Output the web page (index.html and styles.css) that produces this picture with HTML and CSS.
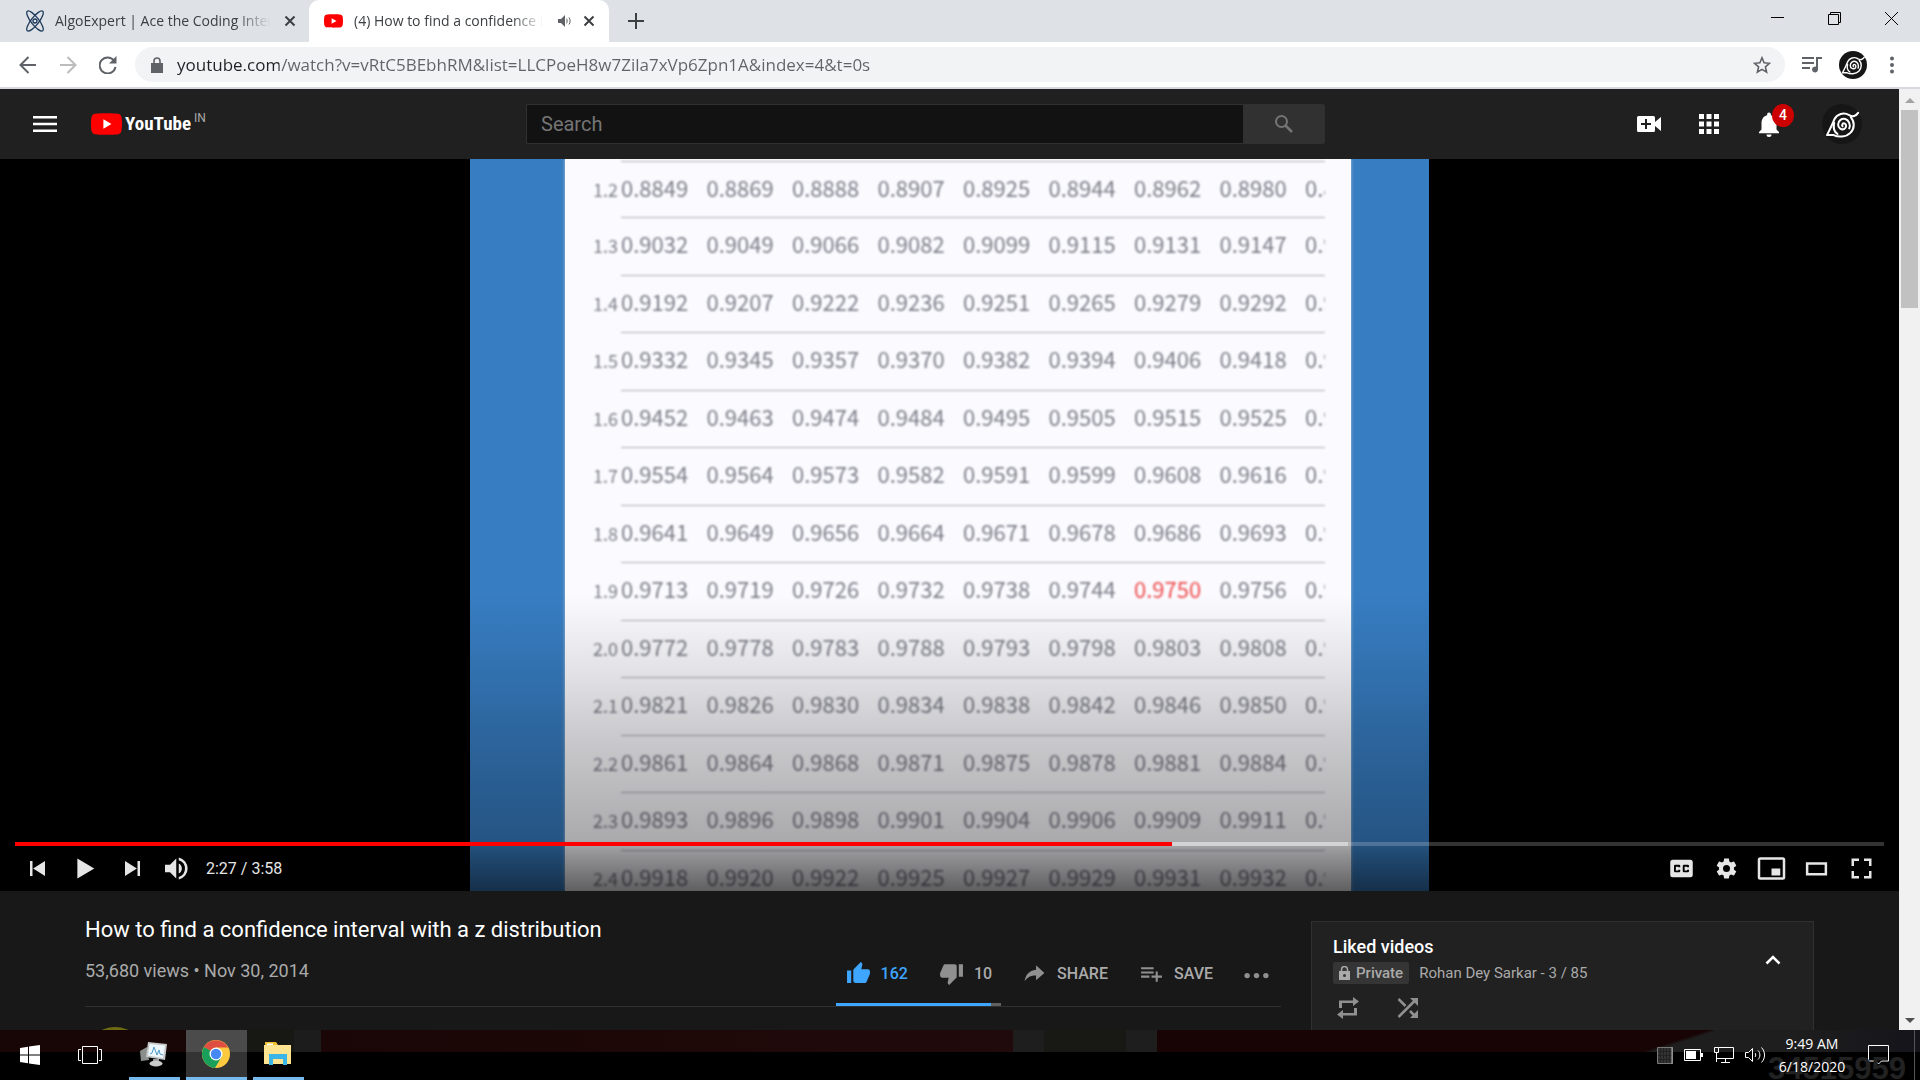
FILE: index.html
```html
<!DOCTYPE html>
<html lang="en">
<head>
<meta charset="utf-8">
<title>How to find a confidence interval with a z distribution - YouTube</title>
<link rel="stylesheet" href="styles.css">
</head>
<body>
<svg width="0" height="0" class="defs" aria-hidden="true">
  <symbol id="leaf" viewBox="0 0 36 36">
    <circle cx="18" cy="18" r="18" fill="#161616"/>
    <g fill="none" stroke="#fff" stroke-width="1.800" stroke-linecap="round" stroke-linejoin="round">
      <path d="M32.500 8c-2 3-5 4-8 2-5-3-11-1-13.500 4-1.500 4-4 9-6.500 14h6c4 2 11 2 15-2 4-4 4-10 .5-14"/>
      <path d="M11 17c-1 4 0 8 3 10"/>
      <path d="M18.500 20c-1-1 0-3 1.800-2.500s2 4-.3 5-5.500-.5-5.500-4 3.500-6 6.500-5 5 5 3.500 8.500"/>
    </g>
  </symbol>
  <symbol id="yt-mark" viewBox="0 0 30 21">
    <path fill="#f00" d="M29.300 3.300A3.800 3.800 0 0 0 26.600.6C24.300 0 15 0 15 0S5.700 0 3.400.6A3.800 3.800 0 0 0 .7 3.300C0 5.600 0 10.500 0 10.500s0 4.900.7 7.200a3.800 3.800 0 0 0 2.700 2.700C5.700 21 15 21 15 21s9.300 0 11.600-.6a3.800 3.800 0 0 0 2.700-2.700c.7-2.300.7-7.200.7-7.200s0-4.900-.7-7.200z"/>
    <path fill="#fff" d="M12 15l7.800-4.500L12 6z"/>
  </symbol>
  <symbol id="cross" viewBox="0 0 12 12"><path d="M1.500 1.500l9 9M10.500 1.500l-9 9" stroke="currentColor" stroke-width="2" fill="none"/></symbol>
</svg>

<header class="browser">
  <div class="tabs">
    <div class="tab">
      <svg width="22" height="22" viewBox="0 0 22 22" fill="none" stroke="#1d3a5a" stroke-width="1.300"><ellipse cx="11" cy="11" rx="12.500" ry="3.800" transform="rotate(52 11 11)"/><ellipse cx="11" cy="11" rx="12.500" ry="3.800" transform="rotate(-52 11 11)"/><circle cx="11" cy="11" r="2"/></svg>
      <span class="tab-title">AlgoExpert | Ace the Coding Interview</span>
      <button class="plain" aria-label="Close tab"><svg width="12" height="12"><use href="#cross"/></svg></button>
    </div>
    <div class="tab active">
      <svg width="19" height="14"><use href="#yt-mark"/></svg>
      <span class="tab-title">(4) How to find a confidence interval</span>
      <svg width="14" height="12" viewBox="0 0 14 12" fill="#5f6368"><path d="M0 4h3l4-4v12L3 8H0zM8.500 3v6c1.500-1 1.500-5 0-6z"/><path d="M11 2.500c1.500 2 1.500 5 0 7" fill="none" stroke="#5f6368"/></svg>
      <button class="plain" aria-label="Close tab"><svg width="12" height="12"><use href="#cross"/></svg></button>
    </div>
    <button class="plain new-tab" aria-label="New tab"><svg width="16" height="16" viewBox="0 0 16 16" stroke="#3c4043" stroke-width="2"><path d="M8 0v16M0 8h16"/></svg></button>
    <div class="window-buttons">
      <button class="plain" aria-label="Minimize"><svg width="13" height="13" viewBox="0 0 13 13" stroke="#000"><path d="M0 5.500h13"/></svg></button>
      <button class="plain" aria-label="Restore"><svg width="13" height="13" viewBox="0 0 13 13" stroke="#000" fill="none"><path d="M.5 2.500h10v10H.5zM2.500 2.500v-2h10v10h-2"/></svg></button>
      <button class="plain" aria-label="Close"><svg width="13" height="13" viewBox="0 0 13 13" stroke="#000"><path d="M0 0l13 13M13 0L0 13"/></svg></button>
    </div>
  </div>
  <div class="toolbar">
    <button class="plain nav" aria-label="Back"><svg width="18" height="18" viewBox="0 0 18 18" fill="none" stroke="#5f6368" stroke-width="2"><path d="M17 9H2M9.500 1L1.500 9l8 8"/></svg></button>
    <button class="plain nav" aria-label="Forward"><svg width="18" height="18" viewBox="0 0 18 18" fill="none" stroke="#babcbe" stroke-width="2"><path d="M1 9h15M8.500 1l8 8-8 8"/></svg></button>
    <button class="plain nav" aria-label="Reload"><svg width="18" height="18" viewBox="0 0 18 18"><path d="M15 4.500A8 8 0 1 0 16.500 11" fill="none" stroke="#5f6368" stroke-width="2"/><path d="M17.500 0v7.500H10z" fill="#5f6368"/></svg></button>
    <div class="omnibox">
      <svg width="12" height="16" viewBox="0 0 12 16"><path fill="#5f6368" d="M0 6h12v10H0z"/><path d="M3 6V4a3 3 0 0 1 6 0v2" fill="none" stroke="#5f6368" stroke-width="1.600"/></svg>
      <input class="url" aria-label="Address" value="youtube.com/watch?v=vRtC5BEbhRM&amp;list=LLCPoeH8w7Zila7xVp6Zpn1A&amp;index=4&amp;t=0s">
      <button class="plain" aria-label="Bookmark"><svg width="18" height="18" viewBox="0 0 18 18" fill="none" stroke="#5f6368" stroke-width="1.600"><path d="M9 1.800l2.100 5 5.400.5-4.100 3.600 1.200 5.300L9 13.400l-4.600 2.800 1.200-5.300L1.500 7.300l5.400-.5z"/></svg></button>
    </div>
    <button class="plain" aria-label="Media"><svg width="20" height="16" viewBox="0 0 20 16" fill="#5f6368"><path d="M0 0h12v2H0zM0 5h12v2H0zM0 10h8v2H0zM14 0h6v2h-4v10.500a3 3 0 1 1-2-2.800z"/></svg></button>
    <button class="plain" aria-label="Profile"><svg width="28" height="28"><use href="#leaf"/></svg></button>
    <button class="plain menu" aria-label="Menu"><svg width="4" height="18" viewBox="0 0 4 18" fill="#5f6368"><circle cx="2" cy="2.500" r="2"/><circle cx="2" cy="9" r="2"/><circle cx="2" cy="15.500" r="2"/></svg></button>
  </div>
</header>

<div class="viewport">
  <div class="page">
    <header class="masthead">
      <div class="brand">
        <button class="plain" aria-label="Guide"><svg width="24" height="16" viewBox="0 0 24 16" fill="#fff"><path d="M0 0h24v2.500H0zM0 6.700h24v2.600H0zM0 13.500h24V16H0z"/></svg></button>
        <a class="logo" href="#"><svg width="31" height="22"><use href="#yt-mark"/></svg><span class="wordmark">YouTube</span><sup>IN</sup></a>
      </div>
      <form class="search">
        <input type="text" placeholder="Search" aria-label="Search">
        <button type="button" aria-label="Search"><svg width="18" height="18" viewBox="0 0 18 18" fill="none" stroke="#757575"><circle cx="6.500" cy="6.500" r="5.500" stroke-width="2"/><path d="M10.500 10.500l6.500 6.500" stroke-width="2.500"/></svg></button>
      </form>
      <div class="account">
        <button class="plain" aria-label="Create"><svg width="24" height="16" viewBox="0 0 24 16" fill="#fff"><path fill-rule="evenodd" d="M1.500 0h15A1.500 1.500 0 0 1 18 1.500V6l6-5v14l-6-5v4.500a1.500 1.500 0 0 1-1.500 1.500h-15A1.500 1.500 0 0 1 0 14.500v-13A1.500 1.500 0 0 1 1.500 0zM8 3v4H4v2h4v4h2V9h4V7h-4V3z"/></svg></button>
        <button class="plain" aria-label="Apps"><svg width="20" height="20" viewBox="0 0 20 20" fill="#fff"><path d="M0 0h5v5H0zM7.500 0h5v5h-5zM15 0h5v5h-5zM0 7.500h5v5H0zM7.500 7.500h5v5h-5zM15 7.500h5v5h-5zM0 15h5v5H0zM7.500 15h5v5h-5zM15 15h5v5h-5z"/></svg></button>
        <button class="plain bell" aria-label="Notifications"><svg width="20" height="25" viewBox="0 0 20 25" fill="#fff"><path d="M10 25a2.500 2.500 0 0 0 2.500-2.500h-5A2.500 2.500 0 0 0 10 25zM17.500 17.500v-6.300c0-4-2-7-5.600-7.900v-.8a1.900 1.900 0 0 0-3.800 0v.8c-3.600.9-5.600 4-5.600 7.900v6.300L0 20v1.200h20V20z"/></svg><span class="badge">4</span></button>
        <button class="plain" aria-label="Account"><svg width="40" height="40"><use href="#leaf"/></svg></button>
      </div>
    </header>

    <section class="player">
      <div class="still">
        <div class="sheet">
          <table>
            <colgroup><col class="z"><col span="8"><col class="cut"></colgroup>
            <tbody>
            <tr><th>1.2</th><td>0.8849</td><td>0.8869</td><td>0.8888</td><td>0.8907</td><td>0.8925</td><td>0.8944</td><td>0.8962</td><td>0.8980</td><td>0.8</td></tr>
            <tr><th>1.3</th><td>0.9032</td><td>0.9049</td><td>0.9066</td><td>0.9082</td><td>0.9099</td><td>0.9115</td><td>0.9131</td><td>0.9147</td><td>0.9</td></tr>
            <tr><th>1.4</th><td>0.9192</td><td>0.9207</td><td>0.9222</td><td>0.9236</td><td>0.9251</td><td>0.9265</td><td>0.9279</td><td>0.9292</td><td>0.9</td></tr>
            <tr><th>1.5</th><td>0.9332</td><td>0.9345</td><td>0.9357</td><td>0.9370</td><td>0.9382</td><td>0.9394</td><td>0.9406</td><td>0.9418</td><td>0.9</td></tr>
            <tr><th>1.6</th><td>0.9452</td><td>0.9463</td><td>0.9474</td><td>0.9484</td><td>0.9495</td><td>0.9505</td><td>0.9515</td><td>0.9525</td><td>0.9</td></tr>
            <tr><th>1.7</th><td>0.9554</td><td>0.9564</td><td>0.9573</td><td>0.9582</td><td>0.9591</td><td>0.9599</td><td>0.9608</td><td>0.9616</td><td>0.9</td></tr>
            <tr><th>1.8</th><td>0.9641</td><td>0.9649</td><td>0.9656</td><td>0.9664</td><td>0.9671</td><td>0.9678</td><td>0.9686</td><td>0.9693</td><td>0.9</td></tr>
            <tr><th>1.9</th><td>0.9713</td><td>0.9719</td><td>0.9726</td><td>0.9732</td><td>0.9738</td><td>0.9744</td><td class="hit">0.9750</td><td>0.9756</td><td>0.9</td></tr>
            <tr><th>2.0</th><td>0.9772</td><td>0.9778</td><td>0.9783</td><td>0.9788</td><td>0.9793</td><td>0.9798</td><td>0.9803</td><td>0.9808</td><td>0.9</td></tr>
            <tr><th>2.1</th><td>0.9821</td><td>0.9826</td><td>0.9830</td><td>0.9834</td><td>0.9838</td><td>0.9842</td><td>0.9846</td><td>0.9850</td><td>0.9</td></tr>
            <tr><th>2.2</th><td>0.9861</td><td>0.9864</td><td>0.9868</td><td>0.9871</td><td>0.9875</td><td>0.9878</td><td>0.9881</td><td>0.9884</td><td>0.9</td></tr>
            <tr><th>2.3</th><td>0.9893</td><td>0.9896</td><td>0.9898</td><td>0.9901</td><td>0.9904</td><td>0.9906</td><td>0.9909</td><td>0.9911</td><td>0.9</td></tr>
            <tr><th>2.4</th><td>0.9918</td><td>0.9920</td><td>0.9922</td><td>0.9925</td><td>0.9927</td><td>0.9929</td><td>0.9931</td><td>0.9932</td><td>0.9</td></tr>
            </tbody>
          </table>
        </div>
      </div>
      <div class="chrome">
        <div class="progress"><div class="loaded" style="width:71.3%"></div><div class="played" style="width:61.9%"></div></div>
        <div class="controls">
          <button class="plain" aria-label="Previous"><svg viewBox="0 0 36 36"><path d="M12 12h2v12h-2zM14.500 18l9.500 6V12z"/></svg></button>
          <button class="plain play" aria-label="Play"><svg viewBox="0 0 36 36"><path d="M11.500 10l13.500 8-13.500 8z"/></svg></button>
          <button class="plain" aria-label="Next"><svg viewBox="0 0 36 36"><path d="M12 24l9.500-6L12 12zM22 12v12h2V12z"/></svg></button>
          <button class="plain" aria-label="Mute"><svg viewBox="0 0 36 36"><path d="M8 21h4l5 5V10l-5 5H8zM19 14v8c1.500-.7 2.500-2.200 2.500-4s-1-3.300-2.500-4zM19 11.300a7 7 0 0 1 0 13.400v2.100a9 9 0 0 0 0-17.600z"/></svg></button>
          <span class="time">2:27 / 3:58</span>
          <button class="plain" aria-label="Subtitles"><svg viewBox="0 0 36 36"><path fill-rule="evenodd" d="M11 11h14a2 2 0 0 1 2 2v10a2 2 0 0 1-2 2H11a2 2 0 0 1-2-2V13a2 2 0 0 1 2-2zm6 6v-1a1 1 0 0 0-1-1h-3a1 1 0 0 0-1 1v4a1 1 0 0 0 1 1h3a1 1 0 0 0 1-1v-1h-1.500v.5h-2v-3h2v.5zm7 0v-1a1 1 0 0 0-1-1h-3a1 1 0 0 0-1 1v4a1 1 0 0 0 1 1h3a1 1 0 0 0 1-1v-1h-1.500v.5h-2v-3h2v.5z"/></svg></button>
          <button class="plain" aria-label="Settings"><svg viewBox="0 0 36 36"><path d="m23.940 18.780c.03-.25.05-.51.05-.78 0-.27-.02-.52-.05-.78l1.680-1.320c.15-.12.190-.33.090-.51l-1.600-2.760c-.09-.17-.31-.24-.48-.17l-1.990.8c-.41-.32-.86-.58-1.350-.78l-.3-2.120c-.02-.19-.19-.33-.39-.33l-3.200 0c-.2 0-.36.140-.39.330l-.3 2.120c-.48.200-.93.470-1.350.78l-1.990-.8c-.18-.07-.39 0-.48.170l-1.600 2.760c-.10.170-.05.390.090.510l1.680 1.320c-.03.250-.05.520-.05.780 0 .260.020.520.050.78l-1.680 1.320c-.15.120-.19.330-.09.510l1.600 2.760c.090.170.310.240.480.170l1.990-.8c.410.320.86.58 1.350.78l.3 2.120c.020.190.190.330.390.330l3.200 0c.2 0 .36-.14.390-.33l.3-2.120c.48-.2.930-.47 1.350-.78l1.990.8c.180.070.390 0 .480-.17l1.600-2.760c.09-.17.05-.39-.09-.51zM18 20.800a2.800 2.800 0 1 1 0-5.600 2.800 2.800 0 0 1 0 5.600z"/></svg></button>
          <button class="plain" aria-label="Miniplayer"><svg viewBox="0 0 36 36"><path fill-rule="evenodd" d="M9 9h18a2 2 0 0 1 2 2v14a2 2 0 0 1-2 2H9a2 2 0 0 1-2-2V11a2 2 0 0 1 2-2zm0 2v14h18V11zm9 7h7v5.500h-7z"/></svg></button>
          <button class="plain" aria-label="Theater mode"><svg viewBox="0 0 36 36"><path fill-rule="evenodd" d="M9.500 13h17v10.500h-17zm2 2v6.500h13V15z"/></svg></button>
          <button class="plain" aria-label="Full screen"><svg viewBox="0 0 36 36"><path d="M10 16h2v-4h4v-2h-6zM20 10v2h4v4h2v-6zM24 24h-4v2h6v-6h-2zM12 20h-2v6h6v-2h-4z"/></svg></button>
        </div>
      </div>
    </section>

    <main class="below">
      <section class="info">
        <h1>How to find a confidence interval with a z distribution</h1>
        <div class="meta">
          <span class="views">53,680 views • Nov 30, 2014</span>
          <div class="actions">
            <div class="sentiment">
              <button class="plain liked"><svg viewBox="0 0 24 24"><path d="M1 21h4V9H1zM23 10a2 2 0 0 0-2-2h-6.300l1-4.600v-.3c0-.4-.2-.8-.5-1.100L14.200 1 7.600 7.600A2 2 0 0 0 7 9v10a2 2 0 0 0 2 2h9c.8 0 1.500-.5 1.800-1.200l3-7.100c.1-.2.200-.5.200-.7z"/></svg>162</button>
              <button class="plain"><svg viewBox="0 0 24 24"><path d="M15 3H6c-.8 0-1.500.5-1.800 1.200l-3 7.100c-.1.2-.2.500-.2.700v2a2 2 0 0 0 2 2h6.300l-1 4.600v.3c0 .4.200.8.500 1.100L9.800 23l6.600-6.600c.4-.4.600-.9.600-1.400V5a2 2 0 0 0-2-2zM19 3v12h4V3z"/></svg>10</button>
            </div>
            <button class="plain"><svg viewBox="0 0 24 24"><path d="M13.500 8.500V4l8 7.500-8 7v-4.600c-5 0-8.500 1.600-11 5.600 1-6 4-10 11-11z"/></svg>SHARE</button>
            <button class="plain"><svg viewBox="0 0 24 24"><path d="M2 6h12v2H2zM2 10h12v2H2zM2 14h8v2H2zM16 10h2v4h4v2h-4v4h-2v-4h-4v-2h4z"/></svg>SAVE</button>
            <button class="plain" aria-label="More actions"><svg viewBox="0 0 24 24"><circle cx="3" cy="14" r="2.600"/><circle cx="12" cy="14" r="2.600"/><circle cx="21" cy="14" r="2.600"/></svg></button>
          </div>
        </div>
        <div class="owner"></div>
      </section>
      <aside class="playlist">
        <div class="playlist-head">
          <div>
            <h2>Liked videos</h2>
            <p><span class="private"><svg width="11" height="14" viewBox="0 0 11 14"><path fill="#aaa" fill-rule="evenodd" d="M0 5h11v9H0zm5.500 3a1.500 1.500 0 1 0 0 3 1.500 1.500 0 0 0 0-3z"/><path d="M2.500 5V3.500a3 3 0 0 1 6 0V5" fill="none" stroke="#aaa" stroke-width="1.500"/></svg>Private</span>Rohan Dey Sarkar - 3 / 85</p>
          </div>
          <button class="plain" aria-label="Collapse"><svg width="16" height="10" viewBox="0 0 16 10" fill="none" stroke="#fff" stroke-width="2.500"><path d="M1.500 8.500L8 2l6.500 6.500"/></svg></button>
        </div>
        <div class="playlist-tools">
          <button class="plain" aria-label="Loop"><svg width="22" height="26" viewBox="0 0 22 26"><path fill="#909090" d="M4 5.500h12V2l6 4.500-6 4.500V8H5v5H2V5.500zM18 20.500H6V24l-6-4.500L6 15v3h11v-5h3v7.500z"/></svg></button>
          <button class="plain" aria-label="Shuffle"><svg width="22" height="22" viewBox="0 0 22 22" fill="none" stroke="#909090" stroke-width="2.500"><path d="M1.500 2l7 7M1.500 20L18 3.500M13 14l5.500 5.500"/><path fill="#909090" stroke="none" d="M13 1h8v8zM21 13v8h-8z"/></svg></button>
        </div>
      </aside>
    </main>
  </div>
  <div class="scrollbar" aria-hidden="true">
    <svg width="10" height="5" viewBox="0 0 10 5"><path fill="#a3a3a3" d="M0 5l5-5 5 5z"/></svg>
    <div class="thumb"></div>
    <svg width="10" height="5" viewBox="0 0 10 5"><path fill="#505050" d="M0 0l5 5 5-5z"/></svg>
  </div>
</div>

<footer class="taskbar">
  <button class="plain start" aria-label="Start"><svg width="20" height="20" viewBox="0 0 20 20" fill="#fff"><path d="M0 3l8-1.200v7.700H0zM9 1.600L20 0v9.500H9zM0 10.500h8v7.700L0 17zM9 10.500h11V20L9 18.400z"/></svg></button>
  <button class="plain start" aria-label="Task view"><svg width="24" height="18" viewBox="0 0 24 18" fill="none" stroke="#fff"><path d="M4.500.5h15v17h-15zM3 3.500H.5v11H3M21 3.500h2.500v11H21" /></svg></button>
  <div class="apps">
    <button class="plain" aria-label="Task Manager"><svg width="28" height="26" viewBox="0 0 28 26"><path fill="#8b8f8b" d="M0 10l7-4 2 13-8 1z"/><path fill="#c4c8c9" d="M8 1l19 2-2 16-19-3z"/><path fill="#eef7fb" d="M9.500 3L25 4.500l-2 12.500L8 14.500z"/><path d="M10 13l2-1 2-6 3 8 2-5 1 4 3 1" fill="none" stroke="#4b9cc8"/><path fill="#999" d="M13 18h6v4h-6z"/><ellipse cx="16" cy="22.500" rx="6.500" ry="3" fill="#c9cbcb"/></svg></button>
    <button class="plain current" aria-label="Google Chrome"><svg width="28" height="28" viewBox="0 0 28 28"><circle cx="14" cy="14" r="14" fill="#fdca3f"/><path fill="#1a9f5a" d="M14 14L1.900 7A14 14 0 0 0 13 28l6.500-11z"/><path fill="#de4f42" d="M14 14L1.900 7a14 14 0 0 1 24.300 0.500H14z"/><path fill="#1a9f5a" d="M1.900 7l6 10.500L14 14z"/><circle cx="14" cy="14" r="6.500" fill="#fff"/><circle cx="14" cy="14" r="5.200" fill="#4688f4"/></svg></button>
    <button class="plain" aria-label="File Explorer"><svg width="28" height="24" viewBox="0 0 28 24"><path fill="#f2c02c" d="M1 0h11l2 3H1z"/><path fill="#fee391" d="M0 3h27v19H0z"/><path fill="#fff" d="M3 1.500h6V3H3z"/><path fill="#3bb5e8" d="M5 12h18v11h-4v-6H9v6H5z"/></svg></button>
  </div>
  <div class="tray">
    <svg width="16" height="17" viewBox="0 0 16 17"><path fill="#333" stroke="#777" d="M.5.500h15v16H.5z"/><path d="M3.500 1v15M6.500 1v15M9.500 1v15M12.500 1v15M1 4.500h14M1 8.500h14M1 12.500h14" stroke="#222"/><path d="M15 0v17" stroke="#aaa"/></svg>
    <svg width="19" height="12" viewBox="0 0 19 12"><path d="M.5.500h16v11H.5z" fill="none" stroke="#fff"/><path fill="#fff" d="M2 2h10v8H2zM17 4h2v4h-2z"/></svg>
    <svg width="20" height="16" viewBox="0 0 20 16" fill="none" stroke="#fff"><path d="M4.500.500h15v11H3M.5.500h4v5h-4zM2.500 5.500V15M11.500 12v3M7 15.500h9"/></svg>
    <svg width="21" height="18" viewBox="0 0 21 18" fill="none" stroke="#fff"><path d="M.5 6.500h3l4-4v13l-4-4h-3zM10 7c1 1 1 3 0 4M13 4.500c2.500 2.500 2.500 6.500 0 9M16.500 1.500c4 4 4 11 0 15"/></svg>
    <div class="clock"><span>9:49 AM</span><span>6/18/2020</span></div>
    <svg width="21" height="20" viewBox="0 0 21 20" fill="none" stroke="#fff"><path d="M.5.500h20v15.500h-7l-3 3-3-3h-7z"/></svg>
    <span class="watermark" aria-hidden="true">34515959</span>
  </div>
</footer>
</body>
</html>
```
FILE: styles.css
```css
* { box-sizing: border-box; }

body {
  margin: 0;
  height: 100vh;
  display: flex;
  flex-direction: column;
  overflow: hidden;
  background: #000;
  font-family: Roboto, "Liberation Sans", sans-serif;
}

.defs { position: absolute; }
svg { display: block; flex: none; }
h1, h2, p { margin: 0; font-weight: 400; }

.plain {
  display: flex;
  align-items: center;
  justify-content: center;
  padding: 0;
  border: 0;
  background: none;
  color: inherit;
  font: inherit;
}

/* Browser window */
.browser {
  flex: none;
  background: #fff;
  border-bottom: 2px solid #d8d8df;
  font-family: "Open Sans", "Noto Sans", sans-serif;
}

.tabs {
  display: flex;
  height: 42px;
  background: #dee1e6;
  color: #3c4043;
}

.tab {
  display: flex;
  align-items: center;
  gap: 9px;
  width: 309px;
  padding: 0 13px 0 24px;
  font-size: 14px;
}

.tab.active {
  width: 300px;
  padding: 0 14px 0 15px;
  gap: 11px;
  border-radius: 10px 10px 0 0;
  background: #fff;
}

.tab-title {
  flex: 1;
  overflow: hidden;
  white-space: nowrap;
  line-height: 24px;
  mask-image: linear-gradient(90deg, #000 82%, transparent 98%);
}

.new-tab { width: 54px; }

.window-buttons {
  display: flex;
  margin-left: auto;
}

.window-buttons button { width: 57px; height: 36px; }

.toolbar {
  display: flex;
  align-items: center;
  gap: 17px;
  height: 45px;
  padding: 0 20px 0 8px;
}

.nav { width: 40px; }
.nav + .nav { margin-left: -17px; }
.menu { width: 16px; }

.omnibox {
  flex: 1;
  display: flex;
  align-items: center;
  gap: 14px;
  height: 35px;
  margin-left: -10px;
  padding: 0 14px 0 16px;
  border-radius: 18px;
  background: #f1f3f4;
}

.url {
  flex: 1;
  padding: 0;
  border: 0;
  outline: 0;
  font: 17px/24px "Open Sans", "Noto Sans", sans-serif;
  color: transparent;
  background: linear-gradient(90deg, #202124 102px, #5f6368 102px);
  background-clip: text;
}

/* Page and its scrollbar */
.viewport {
  flex: 1;
  min-height: 0;
  display: flex;
}

.page {
  flex: 1;
  min-width: 0;
  overflow: hidden;
  background: #181818;
  color: #fff;
}

.scrollbar {
  display: flex;
  flex-direction: column;
  align-items: center;
  width: 21px;
  padding: 9px 0 7px;
  background: #f1f1f1;
}

.thumb {
  width: 17px;
  height: 198px;
  margin: 7px 0 auto;
  background: #c1c1c1;
}

/* Masthead */
.masthead {
  display: flex;
  align-items: center;
  justify-content: space-between;
  height: 70px;
  padding: 0 37px 0 33px;
  background: #202020;
}

.brand, .logo, .account { display: flex; align-items: center; }
.brand { width: 304px; gap: 34px; }
.logo { color: #fff; text-decoration: none; }

.wordmark {
  margin-left: 3px;
  font: bold 19px/24px "Liberation Sans Narrow", "Roboto Condensed", Roboto, sans-serif;
}

.logo sup {
  align-self: flex-start;
  margin-left: 3px;
  color: #aaa;
  font-size: 12px;
  line-height: 12px;
}

.search {
  display: flex;
  flex: 0 1 922px;
  height: 40px;
  padding-right: 123px;
}

.search input {
  flex: 1;
  min-width: 0;
  padding: 0 14px;
  border: 1px solid #303030;
  border-right: 0;
  border-radius: 2px 0 0 2px;
  background: #121212;
  color: #fff;
  font: 20px/24px Roboto, sans-serif;
}

.search input::placeholder { color: #757575; }

.search button {
  display: flex;
  align-items: center;
  justify-content: center;
  width: 82px;
  padding: 0;
  border: 1px solid #303030;
  border-radius: 0 2px 2px 0;
  background: #313131;
}

.account { gap: 38px; width: 225px; }

.bell { position: relative; margin: 0 5px 0 2px; }

.badge {
  position: absolute;
  left: 13px;
  top: -8px;
  width: 22px;
  height: 23px;
  border-radius: 50%;
  background: #c00;
  font: 500 14px/22px Roboto, sans-serif;
  text-align: center;
}

/* Player */
.player {
  position: relative;
  height: calc(100vh - 348px);
  background: #000;
  overflow: hidden;
}

.still {
  width: 959px;
  height: 100%;
  margin: 0 auto;
  padding: 0 78px 0 95px;
  background: #377dc2;
  overflow: hidden;
}

.sheet {
  height: 100%;
  padding: 2px 0 0 28px;
  background: #fbfbff;
  box-shadow: 0 0 3px #b8c8d8;
  overflow: hidden;
}

.sheet table {
  width: 732px;
  table-layout: fixed;
  border-collapse: separate;
  border-spacing: 0;
  color: #7c7c88;
  font-family: "Noto Sans CJK JP", "Noto Sans", sans-serif;
  filter: blur(1px);
}

.z { width: 28px; }
.cut { width: 20px; }
.sheet tr { height: 57px; }
.sheet tr:nth-child(even) { height: 58px; }

.sheet td, .sheet th {
  padding: 0;
  overflow: hidden;
  text-align: left;
  vertical-align: baseline;
  white-space: nowrap;
  line-height: 51px;
  font-size: 22px;
}

.sheet td { border-bottom: 1px solid #a8a8b4; }
.sheet tr:first-child td { border-top: 1px solid #a8a8b4; }
.sheet th { font-size: 18px; font-weight: 400; }
.sheet .hit { color: #ee4a4a; }

.chrome {
  position: absolute;
  inset: auto 0 0;
  padding: 248px 15px 0;
  background: linear-gradient(transparent, rgba(0, 0, 0, 0.1) 27%, rgba(0, 0, 0, 0.19) 46%, rgba(0, 0, 0, 0.32) 83%, rgba(0, 0, 0, 0.42) 88%, rgba(0, 0, 0, 0.62));
}

.progress {
  position: relative;
  height: 4px;
  background: rgba(255, 255, 255, 0.2);
}

.loaded, .played { position: absolute; inset: 0 auto 0 0; }
.loaded { background: rgba(255, 255, 255, 0.4); }
.played { background: #f00; }

.controls {
  display: flex;
  align-items: center;
  height: 45px;
  color: #e6e6e6;
}

.controls button, .controls svg { width: 45px; height: 45px; }
.controls .play { width: 50px; }
.controls svg { fill: #e6e6e6; }

.time {
  margin: 0 auto 0 6px;
  font-size: 16px;
  line-height: 20px;
}

/* Below the player */
.below {
  display: grid;
  grid-template-columns: minmax(0, 1fr) 503px;
  gap: 30px;
  padding: 0 85px;
}

.info { padding-top: 24px; }

.info h1 {
  font-size: 22px;
  line-height: 30px;
}

.meta {
  display: flex;
  justify-content: space-between;
  height: 62px;
  border-bottom: 1px solid #303030;
}

.views {
  padding-top: 14px;
  color: #aaa;
  font-size: 18px;
  line-height: 24px;
}

.actions {
  display: flex;
  gap: 31px;
  padding-right: 12px;
  color: #aaa;
  font-size: 16px;
  font-weight: 500;
}

.actions button {
  gap: 10px;
  padding-bottom: 5px;
}

.actions svg {
  width: 25px;
  height: 25px;
  fill: #909090;
}

.sentiment {
  display: flex;
  gap: 31px;
  padding: 0 9px 3px 10px;
  background: linear-gradient(90deg, #3ea6ff 94%, #606060 94%) bottom / 100% 3px no-repeat;
}

.sentiment button { padding-bottom: 2px; }
.actions .sentiment + button { margin-left: -10px; }

.actions .liked { color: #3ea6ff; }
.liked svg { fill: #3ea6ff; }

.owner {
  width: 60px;
  height: 60px;
  margin-top: 20px;
  border-radius: 50%;
  background: #6f6a14;
}

.playlist {
  margin-top: 30px;
  padding: 13px 20px 20px 21px;
  border: 1px solid #303030;
  background: #212121;
  color: #aaa;
}

.playlist-head {
  display: flex;
  justify-content: space-between;
  align-items: center;
  padding-right: 12px;
}

.playlist h2 {
  color: #fff;
  font-size: 18px;
  font-weight: 500;
  line-height: 24px;
}

.playlist p {
  display: flex;
  align-items: center;
  gap: 10px;
  margin-top: 3px;
  font-size: 15px;
  line-height: 22px;
}

.private {
  display: flex;
  align-items: center;
  gap: 6px;
  padding: 0 6px;
  border-radius: 2px;
  background: #353535;
  font-weight: 500;
}

.playlist-tools {
  display: flex;
  gap: 38px;
  margin-top: 11px;
  padding-left: 4px;
}

/* Taskbar */
.taskbar {
  position: relative;
  flex: none;
  display: flex;
  height: 50px;
  background:
    linear-gradient(162deg, #180404 46%, #1e1e1e 54%) 1645px 0 / 70px 22px no-repeat,
    linear-gradient(90deg, #180606 186px, #171714 186px 294px, #1c1c1c 294px 321px, #1a0606 321px, #210a0b 1013px, #1e1e1e 1013px 1044px, #181814 1044px 1126px, #1e1e1e 1126px 1157px, #180404 1157px 1645px, #1e1e1e 1645px 1790px, #15141b) 0 0 / 100% 22px no-repeat,
    #000;
}

.start { width: 60px; }

.apps { display: flex; margin-left: 4px; gap: 1px; }

.apps button {
  width: 61px;
  padding-right: 2px;
  border-bottom: 3px solid transparent;
  background: linear-gradient(#76b9ed, #76b9ed) bottom / 51px 3px no-repeat border-box;
}

.apps .current {
  border-bottom-color: #76b9ed;
  background: linear-gradient(#4b4b4b 22px, #343434 22px);
}

.tray {
  display: flex;
  align-items: center;
  gap: 11px;
  margin-left: auto;
  margin-right: 5px;
  padding-right: 25px;
  border-right: 1px solid #555;
}

.clock {
  position: relative;
  z-index: 1;
  width: 70px;
  margin-right: 10px;
  color: #fff;
  font: 14px/23px "Open Sans", "Noto Sans", sans-serif;
  text-align: center;
}

.clock span { display: block; }

.watermark {
  position: absolute;
  right: 14px;
  bottom: -5px;
  color: #222;
  font: bold 31px/32px "Liberation Sans", sans-serif;
}
```
